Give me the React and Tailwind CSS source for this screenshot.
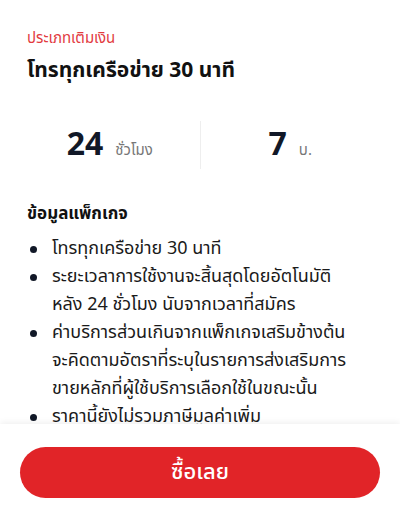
import React from 'react';

const details = [
  ['โทรทุกเครือข่าย 30 นาที'],
  ['ระยะเวลาการใช้งานจะสิ้นสุดโดยอัตโนมัติ', 'หลัง 24 ชั่วโมง นับจากเวลาที่สมัคร'],
  ['ค่าบริการส่วนเกินจากแพ็กเกจเสริมข้างต้น', 'จะคิดตามอัตราที่ระบุในรายการส่งเสริมการ', 'ขายหลักที่ผู้ใช้บริการเลือกใช้ในขณะนั้น'],
  ['ราคานี้ยังไม่รวมภาษีมูลค่าเพิ่ม'],
];

const App = () => {
  return (
    <div
      className="flex flex-col h-[520px] w-[400px] bg-white overflow-hidden text-[#111827]"
      style={{ fontFamily: '"Noto Sans Thai", "Noto Sans", sans-serif' }}
    >
      <div className="flex-1 overflow-hidden">
        <div className="px-[27px] pt-[29px]">
          <p className="text-[15px] leading-[20px] text-[#e23b3f]">ประเภทเติมเงิน</p>
          <h1 className="mt-[9px] text-[21px] leading-[26px] font-bold text-[#111]">
            โทรทุกเครือข่าย 30 นาที
          </h1>
        </div>

        <div className="flex mt-[37px] px-5">
          <div className="flex-1 flex items-baseline justify-center gap-[12px] py-[6px]">
            <span className="text-[32px] leading-[36px] font-bold text-[#111827]">24</span>
            <span className="text-[15px] text-[#777]">ชั่วโมง</span>
          </div>
          <div className="w-px bg-[#eeeeee]" />
          <div className="flex-1 flex items-baseline justify-center gap-[12px] py-[6px]">
            <span className="text-[32px] leading-[36px] font-bold text-[#111827]">7</span>
            <span className="text-[15px] text-[#777]">บ.</span>
          </div>
        </div>

        <div className="px-[27px] mt-[33px]">
          <h2 className="text-[17px] leading-[24px] font-bold text-[#111]">ข้อมูลแพ็กเกจ</h2>
          <ul className="mt-[9px] flex flex-col">
            {details.map((lines, i) => (
              <li key={i} className="flex text-[18px] leading-[28px] text-[#1a1a1a]">
                <span className="w-[25px] shrink-0 flex items-start pt-[11px]">
                  <span className="block w-[7px] h-[7px] ml-[3px] rounded-full bg-[#111827]" />
                </span>
                <span className="flex flex-col">
                  {lines.map((l, j) => (
                    <span key={j} className="block h-[28px] leading-[28px] whitespace-nowrap">
                      {l}
                    </span>
                  ))}
                </span>
              </li>
            ))}
          </ul>
        </div>
      </div>

      <div className="shrink-0 h-[96px] bg-white shadow-[0_-2px_6px_rgba(0,0,0,0.06)] px-5 pt-[23px]">
        <button className="w-full h-[51px] rounded-full bg-[#e12428] text-white text-[22px] font-medium">
          ซื้อเลย
        </button>
      </div>
    </div>
  );
};

export default App;
